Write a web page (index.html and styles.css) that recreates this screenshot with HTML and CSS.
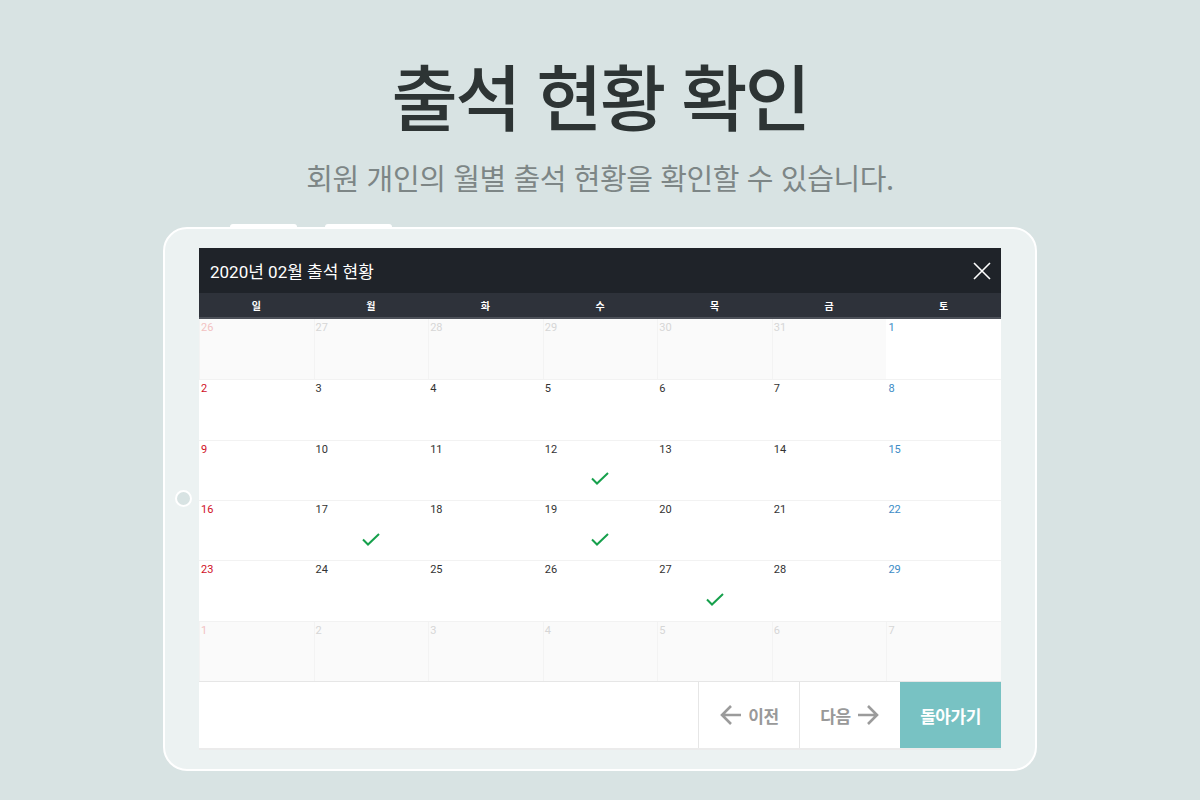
FILE: index.html
```html
<!DOCTYPE html>
<html lang="ko">
<head>
    <meta charset="UTF-8"/>
    <title>출석 현황 확인</title>
    <link rel="stylesheet" href="styles.css">
</head>
<body>
<div class="intro">
    <h1>출석 현황 확인</h1>
    <p class="lead">회원 개인의 월별 출석 현황을 확인할 수 있습니다.</p>
</div>

<!-- ========== TABLET FRAME ========== -->
<div class="tablet">
    <span class="bump bump-1"></span>
    <span class="bump bump-2"></span>
    <span class="home-btn"></span>

    <div class="screen">
        <div class="screen-head">
            <h2>2020년 02월 출석 현황</h2>
            <svg class="close" width="18" height="18" viewBox="0 0 18 18">
                <path d="M1 1L17 17M17 1L1 17" stroke="#fff" stroke-width="1.6" fill="none"/>
            </svg>
        </div>

        <div class="weekdays">
            <div>일</div><div>월</div><div>화</div><div>수</div><div>목</div><div>금</div><div>토</div>
        </div>

        <!-- 6 weeks, 42 cells -->
        <div class="calendar">
            <div class="day other sun"><span class="num">26</span></div>
            <div class="day other"><span class="num">27</span></div>
            <div class="day other"><span class="num">28</span></div>
            <div class="day other"><span class="num">29</span></div>
            <div class="day other"><span class="num">30</span></div>
            <div class="day other"><span class="num">31</span></div>
            <div class="day sat"><span class="num">1</span></div>

            <div class="day sun"><span class="num">2</span></div>
            <div class="day"><span class="num">3</span></div>
            <div class="day"><span class="num">4</span></div>
            <div class="day"><span class="num">5</span></div>
            <div class="day"><span class="num">6</span></div>
            <div class="day"><span class="num">7</span></div>
            <div class="day sat"><span class="num">8</span></div>

            <div class="day sun"><span class="num">9</span></div>
            <div class="day"><span class="num">10</span></div>
            <div class="day"><span class="num">11</span></div>
            <div class="day checked"><span class="num">12</span><span class="mark"><svg width="18" height="13" viewBox="0 0 18 13"><path d="M1 6.5L6 11.5L17 1" stroke="#16a04c" stroke-width="2" fill="none"/></svg></span></div>
            <div class="day"><span class="num">13</span></div>
            <div class="day"><span class="num">14</span></div>
            <div class="day sat"><span class="num">15</span></div>

            <div class="day sun"><span class="num">16</span></div>
            <div class="day checked"><span class="num">17</span><span class="mark"><svg width="18" height="13" viewBox="0 0 18 13"><path d="M1 6.5L6 11.5L17 1" stroke="#16a04c" stroke-width="2" fill="none"/></svg></span></div>
            <div class="day"><span class="num">18</span></div>
            <div class="day checked"><span class="num">19</span><span class="mark"><svg width="18" height="13" viewBox="0 0 18 13"><path d="M1 6.5L6 11.5L17 1" stroke="#16a04c" stroke-width="2" fill="none"/></svg></span></div>
            <div class="day"><span class="num">20</span></div>
            <div class="day"><span class="num">21</span></div>
            <div class="day sat"><span class="num">22</span></div>

            <div class="day sun"><span class="num">23</span></div>
            <div class="day"><span class="num">24</span></div>
            <div class="day"><span class="num">25</span></div>
            <div class="day"><span class="num">26</span></div>
            <div class="day checked"><span class="num">27</span><span class="mark"><svg width="18" height="13" viewBox="0 0 18 13"><path d="M1 6.5L6 11.5L17 1" stroke="#16a04c" stroke-width="2" fill="none"/></svg></span></div>
            <div class="day"><span class="num">28</span></div>
            <div class="day sat"><span class="num">29</span></div>

            <div class="day other sun"><span class="num">1</span></div>
            <div class="day other"><span class="num">2</span></div>
            <div class="day other"><span class="num">3</span></div>
            <div class="day other"><span class="num">4</span></div>
            <div class="day other"><span class="num">5</span></div>
            <div class="day other"><span class="num">6</span></div>
            <div class="day other"><span class="num">7</span></div>
        </div>

        <div class="screen-foot">
            <div class="spacer"></div>
            <button class="nav-btn">
                <svg width="24" height="24" viewBox="0 0 24 24"><path d="M22 12H3M12 3L3 12L12 21" stroke="#9b9b9b" stroke-width="2.6" fill="none"/></svg>
                이전
            </button>
            <button class="nav-btn">
                다음
                <svg width="24" height="24" viewBox="0 0 24 24"><path d="M2 12H21M12 3L21 12L12 21" stroke="#9b9b9b" stroke-width="2.6" fill="none"/></svg>
            </button>
            <button class="back-btn">돌아가기</button>
        </div>
    </div>
</div>
</body>
</html>
```

FILE: styles.css
```css
/* ========== GLOBAL ========== */
body {
  margin: 0;
  background-color: #d8e3e3;
  font-family: Roboto, "Noto Sans CJK KR", sans-serif;
  color: #333;
}

/* ========== INTRO TEXT ========== */
.intro {
  text-align: center;
  padding-top: 58px;
}
.intro h1 {
  margin: 0;
  font-family: "Noto Sans CJK KR", sans-serif;
  font-size: 72px;
  font-weight: 500;
  line-height: 1;
  letter-spacing: -2.6px;
  color: #2d3434;
}
.lead {
  margin: 33px 0 0;
  font-family: "Noto Sans CJK KR", sans-serif;
  font-size: 29px;
  font-weight: 400;
  line-height: 1;
  letter-spacing: -0.4px;
  color: #7d8686;
}

/* ========== TABLET FRAME ========== */
.tablet {
  position: relative;
  width: 802px;
  margin: 35px auto 0;
  padding: 19px 34px;
  background-color: #ecf2f2;
  border: 2px solid #fff;
  border-radius: 24px;
}
.bump {
  position: absolute;
  top: -5px;
  width: 67px;
  height: 4px;
  background-color: #fff;
  border-radius: 3px 3px 0 0;
}
.bump-1 { left: 65px; }
.bump-2 { left: 160px; }
.home-btn {
  position: absolute;
  left: 10px;
  top: 261px;
  width: 13px;
  height: 13px;
  border: 2px solid #fff;
  border-radius: 50%;
  background-color: #d8e3e3;
}

/* ========== SCREEN ========== */
.screen {
  background-color: #fff;
}
.screen-head {
  height: 45px;
  display: flex;
  align-items: center;
  justify-content: space-between;
  padding: 0 10px 0 11px;
  background-color: #1f2329;
}
.screen-head h2 {
  margin: 0;
  font-size: 17px;
  font-weight: 400;
  color: #fff;
}

.weekdays {
  display: grid;
  grid-template-columns: repeat(7, 1fr);
  height: 24px;
  align-items: center;
  background-color: #2e323a;
  border-bottom: 2px solid #4d5159;
  font-size: 10px;
  font-weight: 700;
  color: #fff;
  text-align: center;
}

/* ========== CALENDAR ========== */
.calendar {
  display: grid;
  grid-template-columns: repeat(7, 1fr);
  grid-template-rows: repeat(6, 1fr);
  height: 362px;
}
.day {
  display: flex;
  flex-direction: column;
  border-top: 1px solid #f2f2f2;
  font-size: 11px;
  color: #333;
}
.day:nth-child(-n+7) {
  border-top: none;
}
.num {
  padding: 2px 2px 0;
  line-height: 13px;
}
.mark {
  flex: 1;
  display: flex;
  align-items: center;
  justify-content: center;
  padding-top: 2px;
}
.day.sun { color: #d0101f; }
.day.sat { color: #3d8cc6; }
.day.other {
  background-color: #fafafa;
  box-shadow: inset 1px 0 0 #f3f3f3;
  color: #d6d6d6;
}
.day.other.sun { color: #f2c2c2; }

/* ========== FOOTER BUTTONS ========== */
.screen-foot {
  display: flex;
  height: 66px;
  border-top: 1px solid #e6e6e6;
  border-bottom: 2px solid #ebebeb;
}
.spacer {
  flex: 1;
}
.screen-foot button {
  width: 101px;
  border: none;
  margin: 0;
  padding: 0;
  font-family: "Noto Sans CJK KR", sans-serif;
  font-size: 17px;
  font-weight: 700;
  letter-spacing: -0.5px;
  cursor: pointer;
}
.nav-btn {
  display: flex;
  align-items: center;
  justify-content: center;
  gap: 5px;
  background-color: #fff;
  border-left: 1px solid #e6e6e6 !important;
  color: #999;
}
.back-btn {
  background-color: #78c2c3;
  color: #fff;
}
```
